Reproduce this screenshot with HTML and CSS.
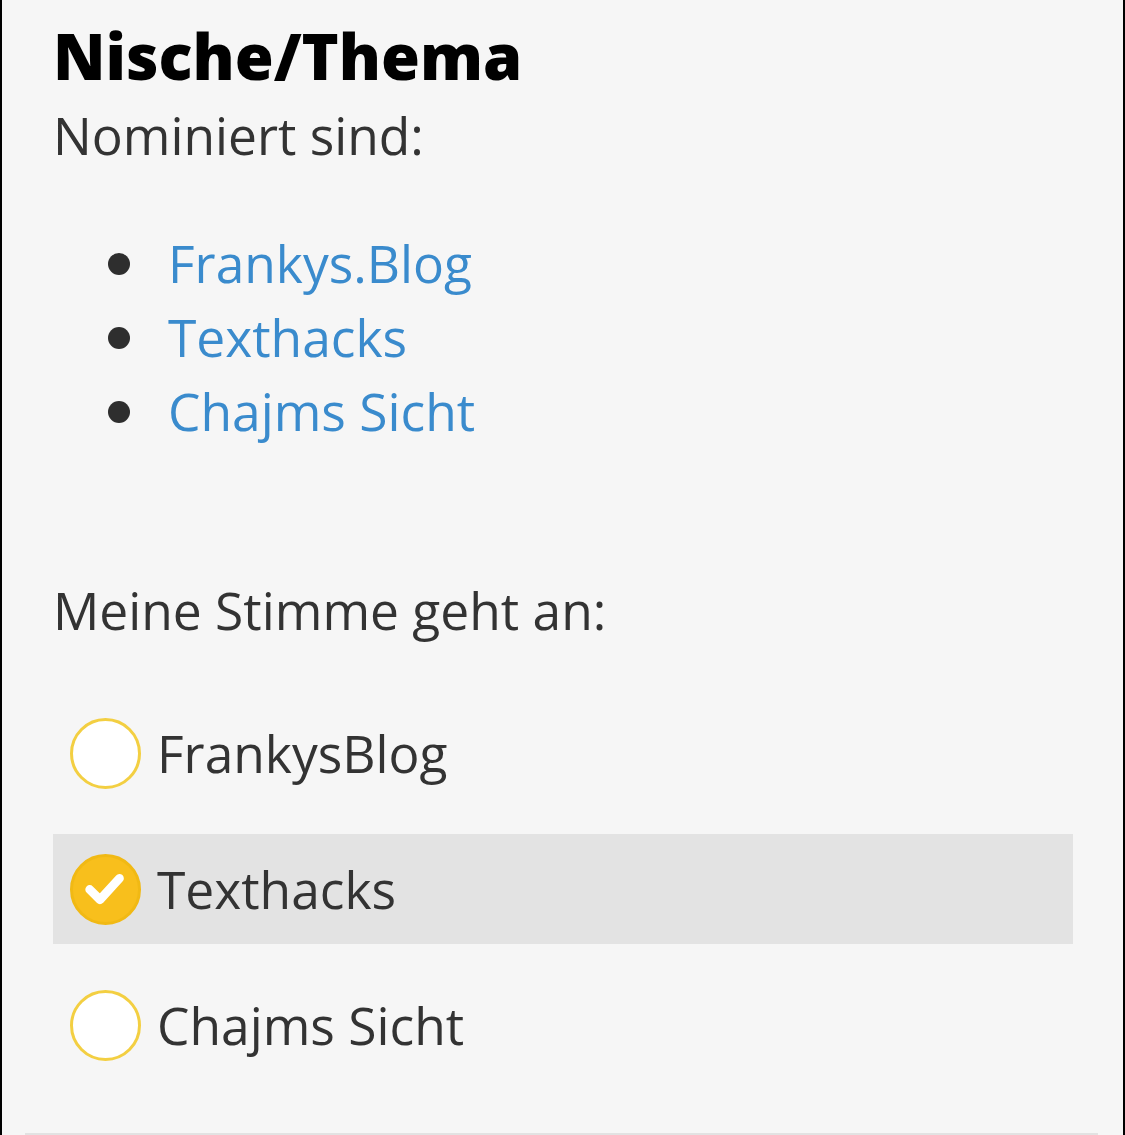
FILE: index.html
```html
<!DOCTYPE html>
<html lang="de">
<head>
    <meta charset="UTF-8">
    <meta name="viewport" content="width=device-width, initial-scale=1.0">
    <title>Nische/Thema</title>
    <link rel="stylesheet" href="styles.css">
</head>
<body>
    <div class="page">
        <h2 class="title">Nische/Thema</h2>
        <p class="intro">Nominiert sind:</p>
        <ul class="nominees">
            <li><a href="#">Frankys.Blog</a></li>
            <li><a href="#">Texthacks</a></li>
            <li><a href="#">Chajms Sicht</a></li>
        </ul>

        <p class="vote-label">Meine Stimme geht an:</p>

        <div class="choices">
            <label class="choice">
                <span class="circle"></span>
                <span class="choice-text">FrankysBlog</span>
            </label>
            <label class="choice selected">
                <span class="circle">
                    <svg viewBox="0 0 70 70">
                        <path d="M18 35 L29 46 L50 23" fill="none" stroke="#fff" stroke-width="9.5" stroke-linecap="round" stroke-linejoin="round"/>
                    </svg>
                </span>
                <span class="choice-text">Texthacks</span>
            </label>
            <label class="choice">
                <span class="circle"></span>
                <span class="choice-text">Chajms Sicht</span>
            </label>
        </div>

        <hr class="divider">
    </div>
</body>
</html>
```

FILE: styles.css
```css
html, body {
    margin: 0;
    padding: 0;
}

body {
    font-family: "Open Sans", "Liberation Sans", sans-serif;
    background: #000;
    color: #333;
}

.page {
    background: #f6f6f6;
    margin: 0 2px;
    height: 1135px;
    padding: 0 51px;
    box-sizing: border-box;
    overflow: hidden;
    display: flex;
    flex-direction: column;
}

.title {
    font-size: 63px;
    font-weight: 800;
    color: #000;
    margin: 0;
    padding-top: 14px;
    line-height: 84px;
}

.intro {
    font-size: 51.5px;
    margin: 0;
    line-height: 74px;
}

.nominees {
    list-style: none;
    margin: 54px 0 0 0;
    padding-left: 115px;
    font-size: 51.5px;
    line-height: 74px;
}

.nominees li {
    position: relative;
}

.nominees li::before {
    content: "";
    position: absolute;
    left: -60px;
    top: 27px;
    width: 22px;
    height: 22px;
    border-radius: 50%;
    background: #2e2e2e;
}

.nominees a {
    color: #3a8bcd;
    text-decoration: none;
}

.vote-label {
    font-size: 51.5px;
    line-height: 74px;
    margin: 125px 0 0 0;
}

.choices {
    margin-top: 51px;
    display: flex;
    flex-direction: column;
    gap: 26px;
    width: 1020px;
}

.choice {
    display: flex;
    align-items: center;
    gap: 16px;
    height: 110px;
    padding-left: 17px;
    font-size: 51.5px;
}

.choice.selected {
    background: #e3e3e3;
}

.circle {
    width: 65px;
    height: 65px;
    border: 3px solid #f3cf42;
    border-radius: 50%;
    background: #fff;
    display: flex;
    align-items: center;
    justify-content: center;
    flex-shrink: 0;
}

.selected .circle {
    background: #f8bf1c;
    border-color: #f1b914;
}

.circle svg {
    width: 65px;
    height: 65px;
}

.choice-text {
    color: #333;
}

.divider {
    margin: auto -26px 0 -28px;
    border: 0;
    border-top: 2px solid #e2e2e2;
    height: 0;
}
```
